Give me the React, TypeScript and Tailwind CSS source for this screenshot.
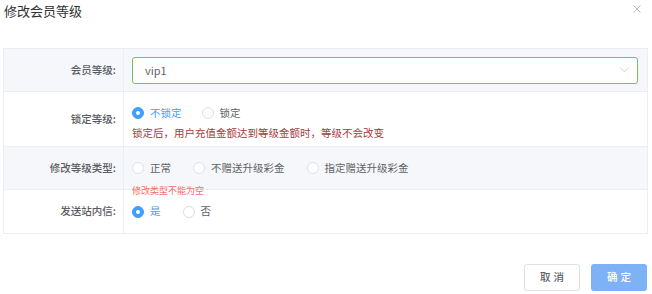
import { useState } from 'react'

const Radio = ({ label, checked, onClick }: { label: string; checked?: boolean; onClick?: () => void }) => (
  <label className="flex items-center gap-[6px] cursor-pointer" onClick={onClick}>
    <span
      className={
        checked
          ? 'w-[12px] h-[12px] rounded-full bg-[#409eff] border border-[#409eff] flex items-center justify-center'
          : 'w-[12px] h-[12px] rounded-full bg-white border border-[#dcdfe6]'
      }
    >
      {checked && <span className="w-[4px] h-[4px] rounded-full bg-white" />}
    </span>
    <span className={checked ? 'text-[#409eff]' : 'text-[#606266]'}>{label}</span>
  </label>
)

const Row = ({ label, gray, children, h }: { label: string; gray?: boolean; children: React.ReactNode; h: string }) => (
  <div className={`grid grid-cols-[120px_1fr] border-b border-[#ebeef5] last:border-b-0 ${gray ? 'bg-[#f5f7fa]' : 'bg-white'} ${h}`}>
    <div className="flex items-center justify-end pr-[7px] border-r border-[#ebeef5] text-[#5a5c61] font-medium">{label}</div>
    <div className="relative flex flex-col justify-center pl-[8px] pr-[9px]">{children}</div>
  </div>
)

export default function App() {
  const [lock, setLock] = useState('0')
  const [type, setType] = useState('')
  const [msg, setMsg] = useState('1')

  return (
    <div
      className="w-[652px] h-[294px] bg-white text-[10.5px] leading-none overflow-hidden"
      style={{ fontFamily: '"Noto Sans CJK SC", "Noto Sans", sans-serif' }}
    >
      <div className="flex justify-between items-start h-[48px] pl-[4px] pr-[11px] pt-[2px]">
        <span className="text-[13px] leading-[17px] text-[#303133]">修改会员等级</span>
        <svg width="8" height="8" viewBox="0 0 8 8" className="mt-[3px]">
          <path d="M0.5 0.5L7.5 7.5M7.5 0.5L0.5 7.5" stroke="#a8abb2" strokeWidth="0.8" />
        </svg>
      </div>

      <div className="ml-[3px] mr-[4px] border border-[#ebeef5]">
        <Row label="会员等级:" gray h="h-[43px]">
          <div className="h-[27px] rounded-[3px] border border-[#7cc05a] bg-white flex items-center justify-between pl-[12px] pr-[8px]">
            <span className="text-[11px] text-[#606266]">vip1</span>
            <svg width="9" height="6" viewBox="0 0 9 6">
              <path d="M0.5 0.8L4.5 4.8L8.5 0.8" fill="none" stroke="#c0c4cc" strokeWidth="0.8" />
            </svg>
          </div>
        </Row>
        <Row label="锁定等级:" h="h-[55px]">
          <div className="flex items-center gap-[20px] mt-[8px]">
            <Radio label="不锁定" checked={lock === '0'} onClick={() => setLock('0')} />
            <Radio label="锁定" checked={lock === '1'} onClick={() => setLock('1')} />
          </div>
          <div className="mt-[9px] text-[#a33b3b]">锁定后，用户充值金额达到等级金额时，等级不会改变</div>
        </Row>
        <Row label="修改等级类型:" gray h="h-[43px]">
          <div className="flex items-center gap-[22px]">
            <Radio label="正常" checked={type === '0'} onClick={() => setType('0')} />
            <Radio label="不赠送升级彩金" checked={type === '1'} onClick={() => setType('1')} />
            <Radio label="指定赠送升级彩金" checked={type === '2'} onClick={() => setType('2')} />
          </div>
          {type === '' && (
            <div className="absolute left-[8px] top-[39px] text-[9px] text-[#f56c6c]">修改类型不能为空</div>
          )}
        </Row>
        <Row label="发送站内信:" h="h-[43px]">
          <div className="flex items-center gap-[22px]">
            <Radio label="是" checked={msg === '1'} onClick={() => setMsg('1')} />
            <Radio label="否" checked={msg === '0'} onClick={() => setMsg('0')} />
          </div>
        </Row>
      </div>

      <div className="flex justify-end gap-[11px] pr-[5px] pt-[30px]">
        <button className="w-[56px] h-[27px] rounded-[3px] border border-[#dcdfe6] bg-white text-[#606266] font-medium tracking-[3px] pl-[3px]">
          取消
        </button>
        <button className="w-[56px] h-[27px] rounded-[3px] bg-[#7db2f7] text-white font-medium tracking-[3px] pl-[3px]">
          确定
        </button>
      </div>
    </div>
  )
}
